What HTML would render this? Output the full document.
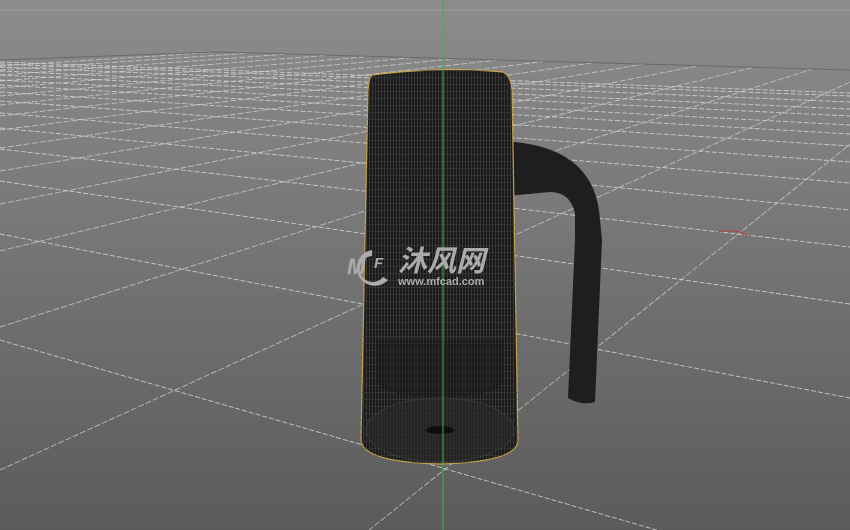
<!DOCTYPE html>
<html><head><style>html,body{margin:0;padding:0;width:850px;height:530px;overflow:hidden;background:#6e6e6e}
svg{display:block}</style></head><body>
<svg width="850" height="530" viewBox="0 0 850 530" xmlns="http://www.w3.org/2000/svg" style="position:absolute;left:0;top:0">
<defs>
<linearGradient id="bg" x1="0" y1="0" x2="0" y2="1">
<stop offset="0" stop-color="#8c8c8c"/><stop offset="0.15" stop-color="#858585"/><stop offset="1" stop-color="#5b5b5b"/>
</linearGradient>
<pattern id="vl" width="3" height="10" patternUnits="userSpaceOnUse">
<rect width="3" height="10" fill="#1b1b1b"/><rect x="0" width="1" height="10" fill="#363636"/>
</pattern>
<pattern id="hl" width="10" height="7" patternUnits="userSpaceOnUse">
<rect y="0" width="10" height="1" fill="#3a3a3a"/>
</pattern>
<clipPath id="gc"><polygon points="0,60 217,52 850,70 850,530 0,530"/></clipPath>
</defs>
<rect width="850" height="530" fill="url(#bg)"/>
<line x1="0" y1="10" x2="850" y2="10" stroke="#9c9c9c" stroke-width="1"/>
<g clip-path="url(#gc)" fill="none" stroke-width="0.9">
<g stroke="#d8d8d8" stroke-dasharray="5 2" opacity="0.85">
<line x1="0" y1="340" x2="850" y2="586"/>
<line x1="0" y1="234" x2="850" y2="398"/>
<line x1="0" y1="181" x2="850" y2="304"/>
<line x1="0" y1="149" x2="850" y2="247"/>
<line x1="0" y1="128" x2="850" y2="210"/>
<line x1="0" y1="113" x2="850" y2="183"/>
<line x1="0" y1="101" x2="850" y2="162"/>
<line x1="0" y1="92" x2="850" y2="146"/>
<line x1="0" y1="85" x2="850" y2="134"/>
<line x1="0" y1="80" x2="850" y2="125"/>
<line x1="0" y1="75" x2="850" y2="116"/>
<line x1="0" y1="71" x2="850" y2="109"/>
<line x1="0" y1="67" x2="850" y2="102"/>
<line x1="0" y1="64" x2="850" y2="96"/>
<line x1="0" y1="62" x2="850" y2="93"/>
</g>
<g stroke="#d0d0d0" stroke-dasharray="6 2" opacity="0.8">
<line x1="0" y1="826" x2="1030" y2="0"/>
<line x1="0" y1="470" x2="1030" y2="0"/>
<line x1="0" y1="327" x2="1030" y2="0"/>
<line x1="0" y1="251" x2="1030" y2="0"/>
<line x1="0" y1="204" x2="1030" y2="0"/>
<line x1="0" y1="171" x2="1030" y2="0"/>
<line x1="0" y1="148" x2="1030" y2="0"/>
<line x1="0" y1="130" x2="1030" y2="0"/>
<line x1="0" y1="116" x2="1030" y2="0"/>
<line x1="0" y1="105" x2="1030" y2="0"/>
<line x1="0" y1="96" x2="1030" y2="0"/>
<line x1="0" y1="88" x2="1030" y2="0"/>
<line x1="0" y1="81" x2="1030" y2="0"/>
<line x1="0" y1="75" x2="1030" y2="0"/>
<line x1="0" y1="70" x2="1030" y2="0"/>
<line x1="0" y1="66" x2="1030" y2="0"/>
</g>
</g>
<polyline points="0,60 217,52 850,70" fill="none" stroke="#6a6a6a" stroke-width="1"/>
<line x1="443" y1="0" x2="443" y2="530" stroke="#3db43d" stroke-width="1"/>
<path d="M497 143 L515 142 Q596 150 600 220 L602 240 L595 402 Q582 406 568 398 L575 240 L575 213 Q570 192 550 192 L518 195 L497 197 Z" fill="#1e1e1e"/>
<path d="M372 75 Q440 66 503 72 Q511 76 512 90 L518 440 Q518 462 440 464 Q362 462 361 440 L368 90 Q369 78 372 75 Z" fill="url(#vl)" stroke="#c9a448" stroke-width="1.2"/>
<path d="M372 75 Q440 66 503 72 Q511 76 512 90 L518 440 Q518 462 440 464 Q362 462 361 440 L368 90 Q369 78 372 75 Z" fill="url(#hl)" opacity="0.7"/>
<path d="M376 340 L504 340 L504 380 Q500 396 440 397 Q380 396 376 380 Z" fill="#1a1a1a" opacity="0.5"/>
<ellipse cx="440" cy="430" rx="74" ry="32" fill="#2a2a2a" opacity="0.6" stroke="#444"/>
<ellipse cx="440" cy="430" rx="14" ry="4" fill="#0e0e0e"/>
<line x1="443" y1="66" x2="443" y2="464" stroke="#3db43d" stroke-width="1"/>
<g fill="#ababab" font-family="'Liberation Sans','Noto Sans CJK SC',sans-serif">
<path d="M372 250 A18 18 0 1 0 388 280 L383 277 A13 13 0 1 1 372 256 Z"/>
<text x="347" y="274" font-size="22" font-weight="bold" font-style="italic">M</text>
<text x="374" y="268" font-size="15" font-weight="bold" font-style="italic">F</text>
<text x="398" y="271" font-size="29" font-weight="bold" font-style="italic">沐风网</text>
<text x="398" y="285" font-size="11" font-weight="bold">www.mfcad.com</text>
</g>
<path d="M718 232 Q735 228 748 236" stroke="#b03a3a" stroke-width="1" fill="none"/>
</svg>
</body></html>
